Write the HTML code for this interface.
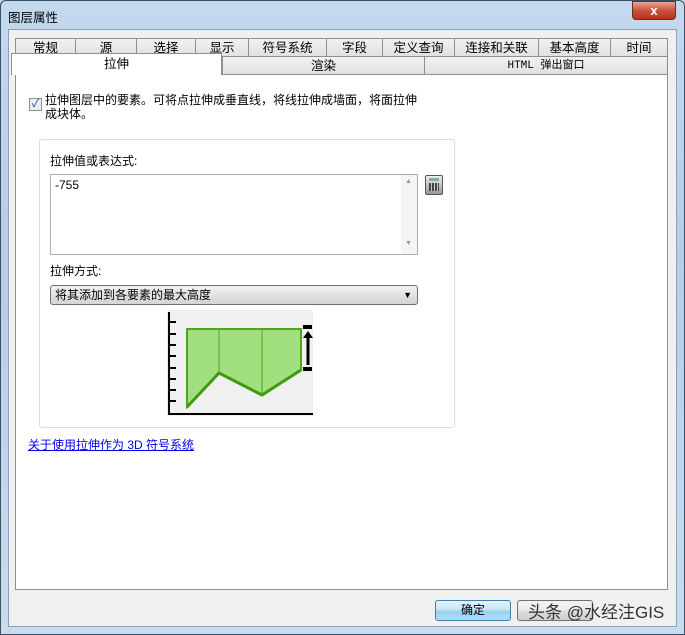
<!DOCTYPE html>
<html><head><meta charset="utf-8"><style>
*{margin:0;padding:0;box-sizing:border-box}
body{width:685px;height:635px;overflow:hidden;font-family:"Liberation Sans","Noto Sans CJK SC",sans-serif;font-size:12px;color:#000;background:#bcd3ea;position:relative}
.a{position:absolute}
.frame{left:0;top:0;width:685px;height:635px;background:linear-gradient(#c4d9ee,#b6cde6 40%,#c9dcef);border:1px solid #3b4f66;border-radius:6px 6px 0 0}
.client{left:8px;top:29px;width:669px;height:598px;background:#f0f0f0;border:1px solid #8ca2bb}
.tab{position:absolute;height:19px;border:1px solid #8e8f8f;border-bottom:none;background:linear-gradient(#f2f2f2,#e0e0e0);text-align:center;line-height:18px;font-size:12.5px}
.page{left:15px;top:74px;width:653px;height:516px;background:#fff;border:1px solid #8e8f8f}
.btn{position:absolute;height:21px;border:1px solid #707070;border-radius:3px;text-align:center;line-height:19px;background:linear-gradient(#f2f2f2,#ebebeb 50%,#dddddd 51%,#cfcfcf)}
</style></head><body>
<div class="a frame"></div>
<div class="a" style="left:8px;top:7px;font-size:12.5px">图层属性</div>
<div class="a" style="left:632px;top:1px;width:44px;height:19px;border:1px solid #6d2b22;border-radius:0 0 4px 4px;background:linear-gradient(#e8a493,#c9543d 50%,#b7321a);color:#fff;font-weight:bold;text-align:center;line-height:17px;font-size:13px">x</div>
<div class="a client"></div>
<div class="tab" style="left:15px;top:38px;width:61px">常规</div>
<div class="tab" style="left:75px;top:38px;width:62px">源</div>
<div class="tab" style="left:136px;top:38px;width:60px">选择</div>
<div class="tab" style="left:195px;top:38px;width:54px">显示</div>
<div class="tab" style="left:248px;top:38px;width:79px">符号系统</div>
<div class="tab" style="left:326px;top:38px;width:57px">字段</div>
<div class="tab" style="left:382px;top:38px;width:73px">定义查询</div>
<div class="tab" style="left:454px;top:38px;width:85px">连接和关联</div>
<div class="tab" style="left:538px;top:38px;width:73px">基本高度</div>
<div class="tab" style="left:610px;top:38px;width:58px">时间</div>
<div class="tab" style="left:222px;top:56px;width:203px">渲染</div>
<div class="tab" style="left:424px;top:56px;width:244px;font-family:'Liberation Mono','Noto Sans CJK SC',monospace;font-size:11px">HTML 弹出窗口</div>
<div class="a page"></div>
<div class="tab" style="left:11px;top:53px;width:211px;height:22px;background:#fff;border-bottom:none;line-height:20px">拉伸</div>
<div class="a" style="left:29px;top:98px;width:13px;height:13px;border:1px solid #8f8f8f;background:#e8eef6;color:#2b4d8c;font-size:11px;line-height:11px;text-align:center">✓</div>
<div class="a" style="left:45px;top:93px;line-height:14px;font-size:12px">拉伸图层中的要素。可将点拉伸成垂直线，将线拉伸成墙面，将面拉伸<br>成块体。</div>
<div class="a" style="left:39px;top:139px;width:416px;height:289px;border:1px solid #dcdcdc;border-radius:3px"></div>
<div class="a" style="left:50px;top:152px">拉伸值或表达式:</div>
<div class="a" style="left:50px;top:174px;width:368px;height:81px;border:1px solid #abadb3;background:#fff"></div>
<div class="a" style="left:401px;top:175px;width:16px;height:79px;background:#f4f4f4"></div>
<div class="a" style="left:405px;top:178px;font-size:7px;color:#999">▲</div>
<div class="a" style="left:405px;top:240px;font-size:7px;color:#999">▼</div>
<div class="a" style="left:55px;top:178px;font-size:12px">-755</div>
<div class="a" style="left:425px;top:175px;width:18px;height:20px;border:1px solid #555;border-radius:2px;background:linear-gradient(#eee,#999)"><div style="margin:2px 3px;width:10px;height:3px;background:#7fb0a8"></div><div style="margin:1px 3px;width:10px;height:8px;background:repeating-linear-gradient(90deg,#444 0 2px,#ccc 2px 3px)"></div></div>
<div class="a" style="left:50px;top:262px">拉伸方式:</div>
<div class="a" style="left:50px;top:285px;width:368px;height:20px;border:1px solid #707070;border-radius:3px;background:linear-gradient(#f2f2f2,#e2e2e2 50%,#d4d4d4);line-height:18px;padding-left:4px">将其添加到各要素的最大高度<span style="position:absolute;right:5px;top:0;font-size:9px">▼</span></div>
<svg class="a" style="left:167px;top:310px" width="146" height="106" viewBox="0 0 146 106">
<rect width="146" height="106" fill="#f0f0f0"/>
<path d="M2 2V104H146" stroke="#000" stroke-width="2" fill="none"/>
<path d="M2 12h7M2 24h7M2 35h7M2 46h7M2 58h7M2 69h7M2 80h7M2 91h7" stroke="#000" stroke-width="2"/>
<path d="M20 19H134V60L95 85L52 63L20 97Z" fill="#a2df7f" stroke="#4fa51e" stroke-width="2"/>
<path d="M20 97L52 63L95 85L134 60" stroke="#3f9a10" stroke-width="3" fill="none"/>
<path d="M52 19V63M95 19V85" stroke="#4fa51e" stroke-width="1"/>
<path d="M136 17h9M136 59h9" stroke="#000" stroke-width="4"/>
<path d="M141 55V26" stroke="#000" stroke-width="3"/>
<path d="M136 28L141 21L146 28Z" fill="#000"/>
</svg>
<div class="a" style="left:28px;top:436px;color:#0000ee;text-decoration:underline">关于使用拉伸作为 3D 符号系统</div>
<div class="btn" style="left:435px;top:600px;width:76px;border-color:#3c7fb1;background:linear-gradient(#e5f4fc,#c4e5f6 50%,#98d1ef 51%,#b0dcf3)">确定</div>
<div class="btn" style="left:517px;top:600px;width:76px"></div>
<div class="a" style="left:528px;top:598px;font-size:17px;color:#333">头条 @水经注GIS</div>
</body></html>
